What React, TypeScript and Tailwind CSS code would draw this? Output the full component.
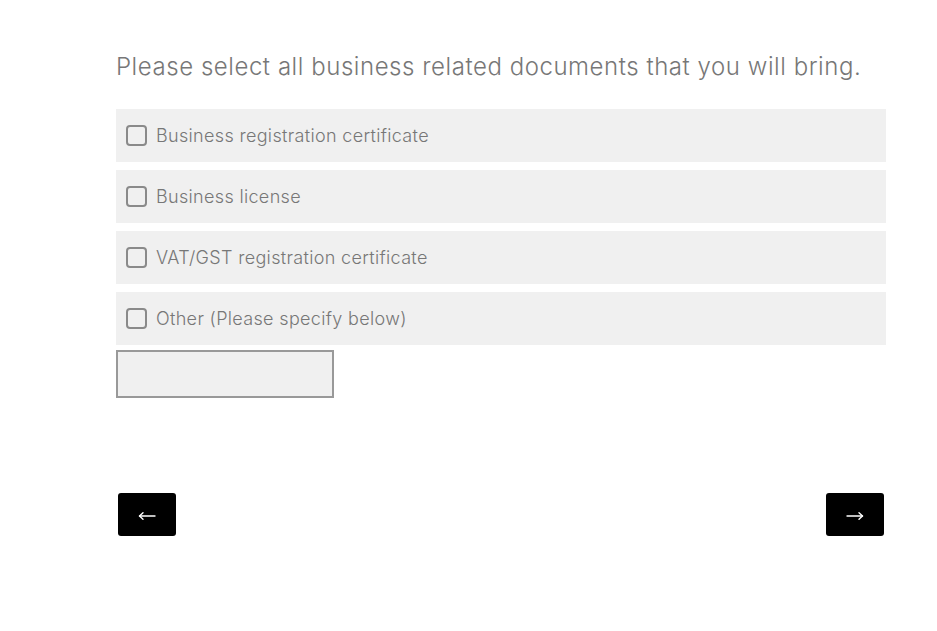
import React, { useState } from 'react'

const options = [
  "Business registration certificate",
  "Business license",
  "VAT/GST registration certificate",
  "Other (Please specify below)",
]

const Arrow = ({ dir }: { dir: "left" | "right" }) => (
  <svg width="18" height="10" viewBox="0 0 18 10" fill="none" stroke="white" strokeWidth="1.4" strokeLinecap="round" strokeLinejoin="round">
    {dir === "left" ? (
      <>
        <path d="M1.5 5H17" />
        <path d="M5 1.8L1.5 5L5 8.2" />
      </>
    ) : (
      <>
        <path d="M1 5H16.5" />
        <path d="M13 1.8L16.5 5L13 8.2" />
      </>
    )}
  </svg>
)

const App = () => {
  const [checked, setChecked] = useState<boolean[]>([false, false, false, false])
  const [other, setOther] = useState("")

  const toggle = (i: number) => {
    const next = [...checked]
    next[i] = !next[i]
    setChecked(next)
  }

  return (
    <div className="min-h-[631px] w-[937px] bg-white font-['Inter','Open_Sans',sans-serif] font-light text-[#777]">
      <div className="ml-[116px] w-[770px] pt-[50px]">
        <h1 className="text-[24px] leading-[34px] font-light tracking-[0.55px] text-[#777]">
          Please select all business related documents that you will bring.
        </h1>
        <div className="mt-[25px] flex flex-col gap-2">
          {options.map((opt, i) => (
            <label key={opt} className="flex h-[53px] cursor-pointer items-center bg-[#f0f0f0] pl-[10px]">
              <span
                onClick={() => toggle(i)}
                className="flex h-[21px] w-[21px] items-center justify-center rounded-[4px] border-2 border-[#8a8a8a] bg-[#f0f0f0]"
              >
                {checked[i] && <span className="h-[10px] w-[10px] bg-[#777]" />}
              </span>
              <span className="ml-[9px] text-[18px] leading-none tracking-[0.33px]">{opt}</span>
            </label>
          ))}
        </div>
        <input
          value={other}
          onChange={(e) => setOther(e.target.value)}
          className="mt-[5px] block h-[48px] w-[218px] border-2 border-[#999] bg-[#f0f0f0] px-2 outline-none"
        />
        <div className="mt-[95px] flex justify-between px-[2px]">
          <button className="flex h-[43px] w-[58px] items-center justify-center rounded-[3px] bg-black pt-[2px]">
            <Arrow dir="left" />
          </button>
          <button className="flex h-[43px] w-[58px] items-center justify-center rounded-[3px] bg-black pt-[2px]">
            <Arrow dir="right" />
          </button>
        </div>
      </div>
    </div>
  )
}

export default App
